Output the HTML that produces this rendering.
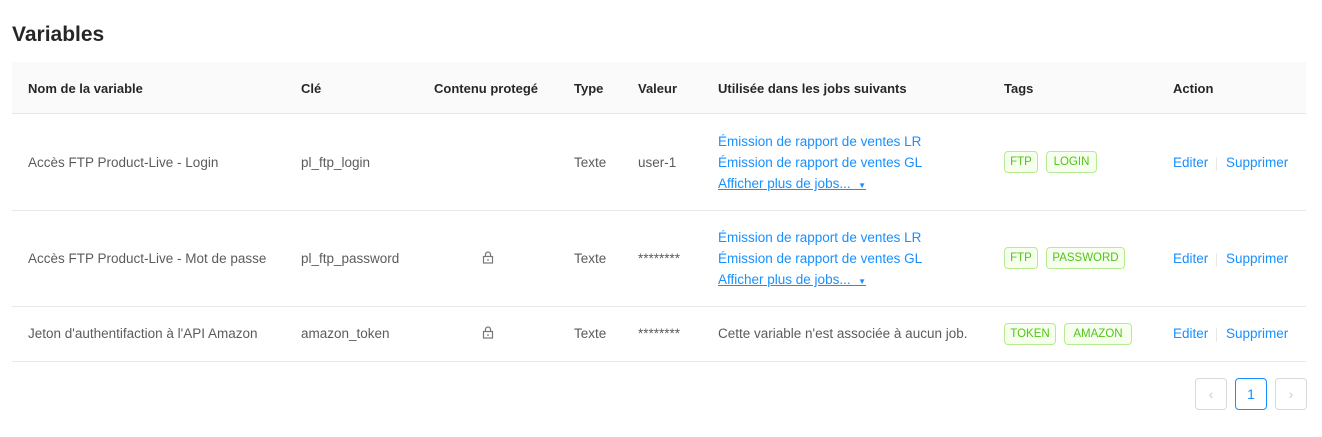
<!DOCTYPE html>
<html><head><meta charset="utf-8"><style>
*{margin:0;padding:0;box-sizing:border-box}
body{width:1322px;height:437px;background:#fff;font-family:"Liberation Sans",sans-serif;font-size:13.5px;color:rgba(0,0,0,.65);position:relative;overflow:hidden}
.a{position:absolute;white-space:nowrap}
h1{position:absolute;left:12px;top:23px;font-size:21px;font-weight:600;color:rgba(0,0,0,.85)}
.hd{position:absolute;left:12px;top:62px;width:1294px;height:52px;background:#fafafa;border-bottom:1px solid #e8e8e8}
.th{color:rgba(0,0,0,.85);font-weight:600;font-size:13px}
.line{position:absolute;left:12px;width:1294px;height:1px;background:#e8e8e8}
.lk{color:#1890ff}
.u{text-decoration:underline}
.tag{position:absolute;height:22px;line-height:21px;text-align:center;border:1px solid #b7eb8f;background:#f6ffed;color:#52c41a;border-radius:4px;font-size:11.5px}
.sep{position:absolute;width:1px;height:14px;background:#e8e8e8}
.pg{position:absolute;top:378px;width:32px;height:32px;border:1px solid #d9d9d9;border-radius:4px;text-align:center;line-height:30px;color:#ccc;font-size:14px}
</style></head><body>
<h1>Variables</h1>
<div class="hd"></div>
<div class="a th" style="left:28px;top:81px">Nom de la variable</div>
<div class="a th" style="left:301px;top:81px">Clé</div>
<div class="a th" style="left:434px;top:81px">Contenu protegé</div>
<div class="a th" style="left:574px;top:81px">Type</div>
<div class="a th" style="left:638px;top:81px">Valeur</div>
<div class="a th" style="left:718px;top:81px">Utilisée dans les jobs suivants</div>
<div class="a th" style="left:1004px;top:81px">Tags</div>
<div class="a th" style="left:1173px;top:81px">Action</div>

<div class="a" style="left:28px;top:155px">Accès FTP Product-Live - Login</div>
<div class="a" style="left:301px;top:155px">pl_ftp_login</div>
<div class="a" style="left:574px;top:155px">Texte</div>
<div class="a" style="left:638px;top:155px">user-1</div>
<div class="a lk" style="left:718px;top:134px">Émission de rapport de ventes LR</div>
<div class="a lk" style="left:718px;top:155px">Émission de rapport de ventes GL</div>
<div class="a lk u" style="left:718px;top:176px">Afficher plus de jobs... &nbsp;<span style="font-size:8px">▼</span></div>
<div class="tag" style="left:1004px;top:151px;width:34px">FTP</div>
<div class="tag" style="left:1046px;top:151px;width:51px">LOGIN</div>
<div class="a lk" style="left:1173px;top:155px">Editer</div><div class="sep" style="left:1216px;top:157px"></div>
<div class="a lk" style="left:1226px;top:155px">Supprimer</div>
<div class="line" style="top:210px"></div>

<div class="a" style="left:28px;top:251px">Accès FTP Product-Live - Mot de passe</div>
<div class="a" style="left:301px;top:251px">pl_ftp_password</div>
<svg class="a" style="left:482px;top:251px" width="12" height="13" viewBox="0 0 12 13"><rect x="1.5" y="5.5" width="9" height="6.5" fill="none" stroke="#777" stroke-width="1.2"/><path d="M3.5 5.5V3.5a2.5 2.5 0 0 1 5 0v2" fill="none" stroke="#777" stroke-width="1.2"/><path d="M6 8v2" stroke="#777" stroke-width="1.2"/></svg>
<div class="a" style="left:574px;top:251px">Texte</div>
<div class="a" style="left:638px;top:251px">********</div>
<div class="a lk" style="left:718px;top:230px">Émission de rapport de ventes LR</div>
<div class="a lk" style="left:718px;top:251px">Émission de rapport de ventes GL</div>
<div class="a lk u" style="left:718px;top:272px">Afficher plus de jobs... &nbsp;<span style="font-size:8px">▼</span></div>
<div class="tag" style="left:1004px;top:247px;width:34px">FTP</div>
<div class="tag" style="left:1046px;top:247px;width:79px">PASSWORD</div>
<div class="a lk" style="left:1173px;top:251px">Editer</div><div class="sep" style="left:1216px;top:253px"></div>
<div class="a lk" style="left:1226px;top:251px">Supprimer</div>
<div class="line" style="top:306px"></div>

<div class="a" style="left:28px;top:326px">Jeton d'authentifaction à l'API Amazon</div>
<div class="a" style="left:301px;top:326px">amazon_token</div>
<svg class="a" style="left:482px;top:326px" width="12" height="13" viewBox="0 0 12 13"><rect x="1.5" y="5.5" width="9" height="6.5" fill="none" stroke="#777" stroke-width="1.2"/><path d="M3.5 5.5V3.5a2.5 2.5 0 0 1 5 0v2" fill="none" stroke="#777" stroke-width="1.2"/><path d="M6 8v2" stroke="#777" stroke-width="1.2"/></svg>
<div class="a" style="left:574px;top:326px">Texte</div>
<div class="a" style="left:638px;top:326px">********</div>
<div class="a" style="left:718px;top:326px">Cette variable n'est associée à aucun job.</div>
<div class="tag" style="left:1004px;top:323px;width:52px">TOKEN</div>
<div class="tag" style="left:1064px;top:323px;width:68px">AMAZON</div>
<div class="a lk" style="left:1173px;top:326px">Editer</div><div class="sep" style="left:1216px;top:328px"></div>
<div class="a lk" style="left:1226px;top:326px">Supprimer</div>
<div class="line" style="top:361px"></div>

<div class="pg" style="left:1195px">&lsaquo;</div>
<div class="pg" style="left:1235px;border-color:#1890ff;color:#1890ff">1</div>
<div class="pg" style="left:1275px">&rsaquo;</div>
</body></html>
